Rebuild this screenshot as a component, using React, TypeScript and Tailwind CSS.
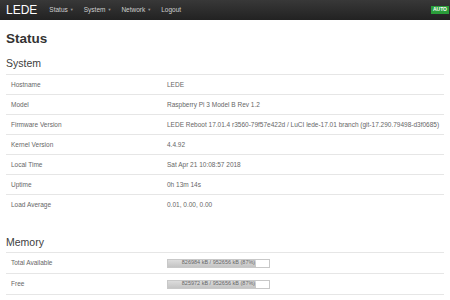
import React from 'react';

const menu = ['Status', 'System', 'Network'];

const system: [string, string][] = [
  ['Hostname', 'LEDE'],
  ['Model', 'Raspberry Pi 3 Model B Rev 1.2'],
  ['Firmware Version', 'LEDE Reboot 17.01.4 r3560-79f57e422d / LuCI lede-17.01 branch (git-17.290.79498-d3f0685)'],
  ['Kernel Version', '4.4.92'],
  ['Local Time', 'Sat Apr 21 10:08:57 2018'],
  ['Uptime', '0h 13m 14s'],
  ['Load Average', '0.01, 0.00, 0.00'],
];

const memory: [string, string, number][] = [
  ['Total Available', '826984 kB / 952656 kB (87%)', 87],
  ['Free', '825972 kB / 952656 kB (87%)', 87],
];

function Bar({ text, pct }: { text: string; pct: number }) {
  return (
    <div className="relative w-[103px] h-[9px] border border-[#c8c8c8] bg-white">
      <div className="h-full bg-gradient-to-b from-[#dcdcdc] to-[#c4c4c4]" style={{ width: `${pct}%` }} />
      <div className="absolute inset-0 flex items-center justify-center text-[5.5px] text-[#666] leading-none">{text}</div>
    </div>
  );
}

export default function App() {
  return (
    <div className="w-[450px] h-[300px] overflow-hidden bg-white font-['Liberation_Sans',Arial,sans-serif]">
      {/* Top bar */}
      <nav className="h-[20px] flex items-center pl-[6px] pr-[1px] bg-gradient-to-b from-[#383838] to-[#222]">
        <span className="text-[12px] text-white leading-none mr-[12px]">LEDE</span>
        <div className="flex items-center gap-[10px] text-[6.5px] text-[#cfcfcf]">
          {menu.map((m) => (
            <span key={m} className="flex items-center gap-[2px]">
              {m}
              <span className="text-[4px] text-[#999]">▼</span>
            </span>
          ))}
          <span>Logout</span>
        </div>
        <span className="ml-auto bg-[#2a9d3a] text-white text-[5px] font-bold px-[2px] h-[8px] flex items-center">AUTO</span>
      </nav>

      <main className="px-[6px]">
        <h2 className="mt-[10px] text-[13.5px] leading-[18px] font-bold text-[#333]">Status</h2>

        <h3 className="mt-[8px] text-[10.5px] leading-[14px] text-[#404040]">System</h3>
        <div className="mt-[4px]">
          {system.map(([k, v]) => (
            <div key={k} className="flex items-center h-[20px] text-[6.5px] text-[#666] border-t border-[#e6e6e6]">
              <span className="w-[161px] pl-[5px]">{k}</span>
              <span className="whitespace-nowrap">{v}</span>
            </div>
          ))}
        </div>

        <h3 className="mt-[21px] text-[10.5px] leading-[14px] text-[#404040]">Memory</h3>
        <div className="mt-[3px] border-b border-[#e6e6e6]">
          {memory.map(([k, v, p]) => (
            <div key={k} className="flex items-center h-[21px] text-[6.5px] text-[#666] border-t border-[#e6e6e6]">
              <span className="w-[161px] pl-[5px]">{k}</span>
              <Bar text={v} pct={p} />
            </div>
          ))}
        </div>
      </main>
    </div>
  );
}
